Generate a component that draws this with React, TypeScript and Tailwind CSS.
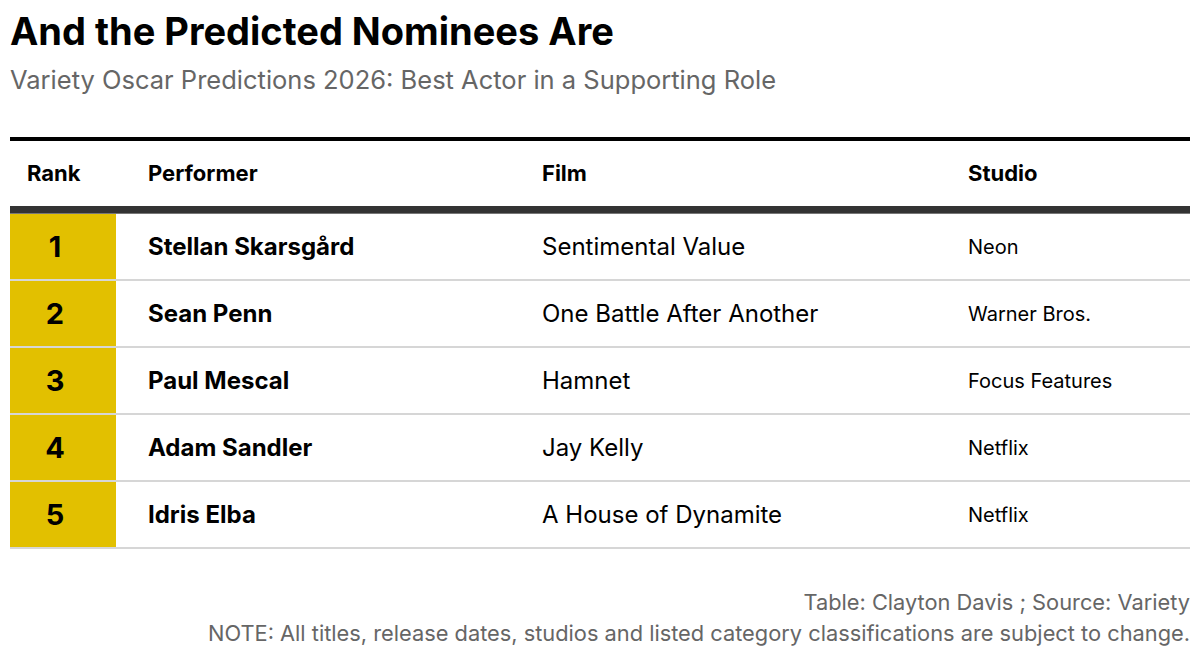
import React from "react";

const rows = [
  { rank: 1, performer: "Stellan Skarsgård", film: "Sentimental Value", studio: "Neon" },
  { rank: 2, performer: "Sean Penn", film: "One Battle After Another", studio: "Warner Bros." },
  { rank: 3, performer: "Paul Mescal", film: "Hamnet", studio: "Focus Features" },
  { rank: 4, performer: "Adam Sandler", film: "Jay Kelly", studio: "Netflix" },
  { rank: 5, performer: "Idris Elba", film: "A House of Dynamite", studio: "Netflix" },
];

export default function App() {
  return (
    <div className="w-[1200px] h-[659px] bg-white px-[10px] pt-[8px] font-['Inter',sans-serif] text-black overflow-hidden">
      <h1 className="text-[38px] leading-[46px] font-bold">And the Predicted Nominees Are</h1>
      <p className="mt-[10px] text-[25.5px] leading-[32px] text-[#666]">
        Variety Oscar Predictions 2026: Best Actor in a Supporting Role
      </p>
      <div className="mt-[41px] border-t-4 border-black">
        <div className="flex items-center h-[65px] text-[22px] font-bold">
          <div className="w-[106px] pl-[17px]">Rank</div>
          <div className="w-[426px] pl-[32px]">Performer</div>
          <div className="w-[426px]">Film</div>
          <div className="flex-1">Studio</div>
        </div>
        <div className="h-[8px] bg-[#333] border-b border-[#777]" />
        {rows.map((r) => (
          <div key={r.rank} className="flex items-center h-[67px] border-b-2 border-[#d6d6d6]">
            <div className="w-[106px] h-full bg-[#e2c000] flex items-center justify-center pr-[16px] text-[29px] font-bold">
              {r.rank}
            </div>
            <div className="w-[426px] pl-[32px] text-[24px] font-bold">{r.performer}</div>
            <div className="w-[426px] text-[24px]">{r.film}</div>
            <div className="flex-1 text-[20px]">{r.studio}</div>
          </div>
        ))}
      </div>
      <div className="mt-[38px] text-right text-[21.8px] leading-[31px] text-[#666]">
        <div>Table: Clayton Davis ; Source: Variety</div>
        <div>NOTE: All titles, release dates, studios and listed category classifications are subject to change.</div>
      </div>
    </div>
  );
}
